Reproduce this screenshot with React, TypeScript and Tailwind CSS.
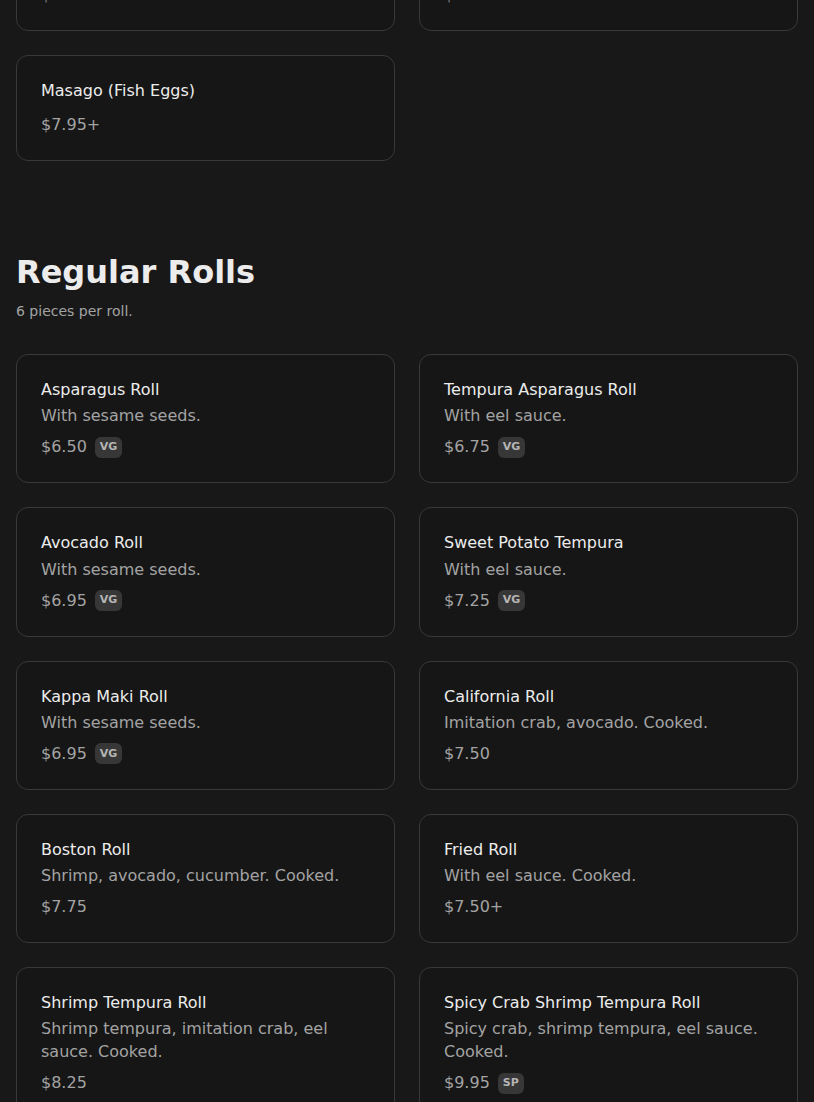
import React from "react";

type Item = { name: string; desc?: string; price: string; badge?: string };

const regular: Item[] = [
  { name: "Asparagus Roll", desc: "With sesame seeds.", price: "$6.50", badge: "VG" },
  { name: "Tempura Asparagus Roll", desc: "With eel sauce.", price: "$6.75", badge: "VG" },
  { name: "Avocado Roll", desc: "With sesame seeds.", price: "$6.95", badge: "VG" },
  { name: "Sweet Potato Tempura", desc: "With eel sauce.", price: "$7.25", badge: "VG" },
  { name: "Kappa Maki Roll", desc: "With sesame seeds.", price: "$6.95", badge: "VG" },
  { name: "California Roll", desc: "Imitation crab, avocado. Cooked.", price: "$7.50" },
  { name: "Boston Roll", desc: "Shrimp, avocado, cucumber. Cooked.", price: "$7.75" },
  { name: "Fried Roll", desc: "With eel sauce. Cooked.", price: "$7.50+" },
  { name: "Shrimp Tempura Roll", desc: "Shrimp tempura, imitation crab, eel sauce. Cooked.", price: "$8.25" },
  { name: "Spicy Crab Shrimp Tempura Roll", desc: "Spicy crab, shrimp tempura, eel sauce. Cooked.", price: "$9.95", badge: "SP" },
];

const prev: Item[] = [
  { name: "Ikura (Salmon Roe)", price: "$8.95+" },
  { name: "Tobiko (Flying Fish Roe)", price: "$7.95+" },
  { name: "Masago (Fish Eggs)", price: "$7.95+" },
];

function Card({ item }: { item: Item }) {
  return (
    <div className="rounded-xl border border-[#393939] bg-[#161616] px-6 pt-[25px] pb-[23px]">
      <div className="text-[16px] leading-[20px] text-[#ececec]">{item.name}</div>
      {item.desc && (
        <div className="mt-[4.25px] text-[16px] leading-[23px] text-[#a3a3a3]">{item.desc}</div>
      )}
      <div className={item.desc ? "mt-2 flex h-6 items-center gap-2" : "mt-3 flex h-6 items-center gap-2"}>
        <span className="text-[16px] leading-[24px] text-[#a3a3a3]">{item.price}</span>
        {item.badge && (
          <span className="flex h-[21px] items-center rounded-md bg-[#373737] px-[5px] text-[11px] font-bold text-[#b5b5b5]">
            {item.badge}
          </span>
        )}
      </div>
    </div>
  );
}

export default function App() {
  return (
    <div
      className="h-[1102px] overflow-hidden bg-[#181818] px-4"
      style={{ fontFamily: '"DejaVu Sans", sans-serif' }}
    >
      <div className="mt-[-75px] grid grid-cols-2 gap-6">
        {prev.map((it) => (
          <Card key={it.name} item={it} />
        ))}
      </div>
      <div className="mt-[91px]">
        <h2 className="text-[32px] font-bold leading-[40px] text-[#ececec]">Regular Rolls</h2>
        <p className="mt-[9px] text-[14px] leading-[20px] text-[#a3a3a3]">6 pieces per roll.</p>
      </div>
      <div className="mt-[33px] grid grid-cols-2 gap-6 pb-10">
        {regular.map((it) => (
          <Card key={it.name} item={it} />
        ))}
      </div>
    </div>
  );
}
